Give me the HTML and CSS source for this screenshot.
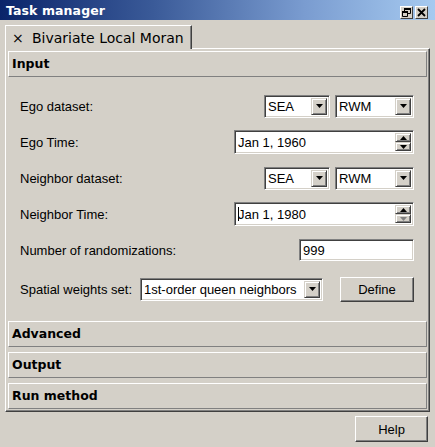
FILE: index.html
```html
<!DOCTYPE html>
<html>
<head>
<meta charset="utf-8">
<link rel="stylesheet" href="styles.css">
</head>
<body>
<div class="window">
  <div class="titlebar">
    <span class="title">Task manager</span>
    <div class="tbtns">
      <span class="tbtn"><svg width="11" height="11" viewBox="0 0 11 11"><path d="M3.5 1.5h6v5h-6z" fill="none" stroke="#000"/><path d="M3 1h7v2H3z" fill="#000"/><path d="M1 4h6v6H1z" fill="#d4d0c8"/><path d="M1.5 4.5h5v5h-5z" fill="none" stroke="#000"/><path d="M1 4h6v2H1z" fill="#000"/></svg></span>
      <span class="tbtn"><svg width="11" height="11" viewBox="0 0 11 11"><path d="M2 2l7 7M9 2l-7 7" stroke="#000" stroke-width="1.8"/></svg></span>
    </div>
  </div>
  <div class="tabs">
    <div class="tab"><span class="tab-x">×</span><span class="tab-label">Bivariate Local Moran</span></div>
  </div>
  <div class="panel">
    <div class="head">Input</div>
    <div class="form">
      <div class="row">
        <span class="label">Ego dataset:</span>
        <div class="ctrls">
          <div class="combo w-sea"><span class="val">SEA</span><span class="drop"><svg width="7" height="4" viewBox="0 0 7 4"><path d="M0 0h7L3.5 4z" fill="#000"/></svg></span></div>
          <div class="combo w-rwm"><span class="val">RWM</span><span class="drop"><svg width="7" height="4" viewBox="0 0 7 4"><path d="M0 0h7L3.5 4z" fill="#000"/></svg></span></div>
        </div>
      </div>
      <div class="row">
        <span class="label">Ego Time:</span>
        <div class="ctrls">
          <div class="spin"><span class="val">Jan 1, 1960</span><span class="arrows"><span class="arr"><svg width="7" height="4" viewBox="0 0 7 4"><path d="M0 4h7L3.5 0z" fill="#000"/></svg></span><span class="arr"><svg width="7" height="4" viewBox="0 0 7 4"><path d="M0 0h7L3.5 4z" fill="#000"/></svg></span></span></div>
        </div>
      </div>
      <div class="row">
        <span class="label">Neighbor dataset:</span>
        <div class="ctrls">
          <div class="combo w-sea"><span class="val">SEA</span><span class="drop"><svg width="7" height="4" viewBox="0 0 7 4"><path d="M0 0h7L3.5 4z" fill="#000"/></svg></span></div>
          <div class="combo w-rwm"><span class="val">RWM</span><span class="drop"><svg width="7" height="4" viewBox="0 0 7 4"><path d="M0 0h7L3.5 4z" fill="#000"/></svg></span></div>
        </div>
      </div>
      <div class="row">
        <span class="label">Neighbor Time:</span>
        <div class="ctrls">
          <div class="spin"><span class="val"><span class="caret"></span>Jan 1, 1980</span><span class="arrows"><span class="arr"><svg width="7" height="4" viewBox="0 0 7 4"><path d="M0 4h7L3.5 0z" fill="#000"/></svg></span><span class="arr"><svg width="7" height="4" viewBox="0 0 7 4"><path d="M0 0h7L3.5 4z" fill="#808080"/></svg></span></span></div>
        </div>
      </div>
      <div class="row">
        <span class="label">Number of randomizations:</span>
        <div class="ctrls">
          <div class="field w-num"><span class="val">999</span></div>
        </div>
      </div>
      <div class="row row-last">
        <span class="label">Spatial weights set:</span>
        <div class="combo w-weights"><span class="val">1st-order queen neighbors</span><span class="drop"><svg width="7" height="4" viewBox="0 0 7 4"><path d="M0 0h7L3.5 4z" fill="#000"/></svg></span></div>
        <div class="ctrls">
          <button class="btn define">Define</button>
        </div>
      </div>
    </div>
    <div class="head">Advanced</div>
    <div class="head gap">Output</div>
    <div class="head gap">Run method</div>
  </div>
  <div class="footer">
    <button class="btn help">Help</button>
  </div>
</div>
</body>
</html>
```
FILE: styles.css
```css
html, body {
  margin: 0;
  padding: 0;
  background: #d4d0c8;
}
.window {
  width: 435px;
  height: 447px;
  background: #d4d0c8;
  font-family: "Liberation Sans", Arial, sans-serif;
  font-size: 13px;
  color: #000;
  overflow: hidden;
}
.titlebar {
  height: 20px;
  display: flex;
  align-items: center;
  justify-content: space-between;
  background: linear-gradient(to right, #0a246a 0%, #3a5a98 35%, #7a9cd0 70%, #a6caf0 100%);
}
.title {
  font-family: "DejaVu Sans", sans-serif;
  font-weight: bold;
  font-size: 12.5px;
  color: #fff;
  padding-left: 6px;
  letter-spacing: 0.1px;
}
.tbtns {
  display: flex;
  gap: 2px;
  padding-right: 7px;
  padding-top: 5px;
}
.tbtn {
  width: 13px;
  height: 13px;
  box-sizing: border-box;
  background: #d4d0c8;
  border-top: 1px solid #fff;
  border-left: 1px solid #fff;
  border-right: 1px solid #404040;
  border-bottom: 1px solid #404040;
  display: flex;
  align-items: center;
  justify-content: center;
}
.tbtn svg { display: block; }
.tabs {
  display: flex;
  padding-left: 5px;
  margin-top: 5px;
  position: relative;
  z-index: 1;
}
.tab {
  width: 187px;
  height: 24px;
  box-sizing: border-box;
  border-top: 1px solid #fff;
  border-left: 1px solid #fff;
  border-right: 1px solid #404040;
  box-shadow: inset -1px 0 #808080;
  background: #d4d0c8;
  display: flex;
  align-items: center;
  font-family: "DejaVu Sans", sans-serif;
  font-size: 14px;
  margin-bottom: -1px;
}
.tab-x {
  width: 26px;
  padding-left: 6px;
  box-sizing: border-box;
  font-size: 14px;
}
.panel {
  margin-left: 5px;
  width: 425px;
  box-sizing: border-box;
  border-top: 1px solid #fff;
  border-left: 1px solid #fff;
  border-right: 1px solid #404040;
  border-bottom: 1px solid #404040;
  box-shadow: inset -1px -1px #808080;
  padding: 2px 2px 2px 2px;
}
.head {
  height: 26px;
  box-sizing: border-box;
  border-top: 1px solid #fff;
  border-left: 1px solid #fff;
  border-right: 1px solid #808080;
  border-bottom: 1px solid #808080;
  font-family: "DejaVu Sans", sans-serif;
  font-weight: bold;
  font-size: 12.5px;
  line-height: 24px;
  padding-left: 3px;
}
.head.gap { margin-top: 5px; }
.form {
  padding: 11px 13px 14px 12px;
}
.row {
  height: 36px;
  display: flex;
  align-items: center;
}
.row-last { margin-top: 3px; }
.label { white-space: nowrap; }
.ctrls {
  margin-left: auto;
  display: flex;
  gap: 5px;
  align-items: center;
}
.combo, .spin, .field {
  box-sizing: border-box;
  background: #fff;
  border-top: 1px solid #808080;
  border-left: 1px solid #808080;
  border-right: 1px solid #fff;
  border-bottom: 1px solid #fff;
  box-shadow: inset 1px 1px #404040, inset -1px -1px #d4d0c8;
  display: flex;
  align-items: stretch;
  padding: 2px;
}
.combo { height: 23px; }
.val {
  flex: 1;
  display: flex;
  align-items: center;
  padding-left: 1px;
  white-space: nowrap;
  overflow: hidden;
}
.drop, .arr {
  width: 16px;
  box-sizing: border-box;
  background: #d4d0c8;
  border-top: 1px solid #d4d0c8;
  border-left: 1px solid #d4d0c8;
  border-right: 1px solid #404040;
  border-bottom: 1px solid #404040;
  box-shadow: inset 1px 1px #fff, inset -1px -1px #808080;
  display: flex;
  align-items: center;
  justify-content: center;
}
.drop svg, .arr svg { display: block; }
.w-sea { width: 66px; }
.w-rwm { width: 79px; }
.spin { width: 180px; height: 24px; }
.arrows {
  display: flex;
  flex-direction: column;
  width: 16px;
}
.arr { flex: 1; }
.caret {
  display: inline-block;
  width: 1px;
  height: 14px;
  background: #000;
  margin-right: -1px;
}
.field.w-num { width: 115px; height: 22px; }
.w-weights {
  width: 183px;
  margin-left: 8px;
}
.btn {
  font-family: "Liberation Sans", Arial, sans-serif;
  font-size: 13px;
  color: #000;
  background: #d4d0c8;
  box-sizing: border-box;
  border-top: 1px solid #fff;
  border-left: 1px solid #fff;
  border-right: 1px solid #404040;
  border-bottom: 1px solid #404040;
  box-shadow: inset -1px -1px #808080;
  padding: 0;
  margin: 0;
}
.define { width: 74px; height: 25px; }
.footer {
  display: flex;
  justify-content: flex-end;
  padding: 4px 7px 0 0;
}
.help { width: 73px; height: 26px; }
```
